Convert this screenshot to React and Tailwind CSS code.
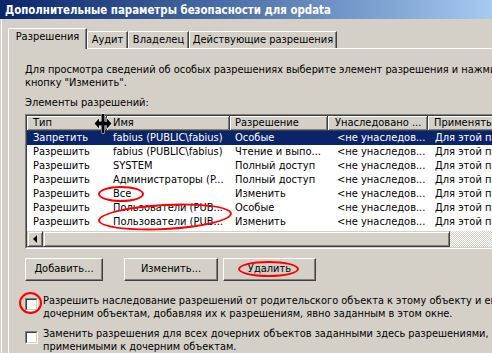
const rows = [
  ['Запретить', 'fabius (PUBLIC\\fabius)', 'Особые', '<не унаследов...', 'Для этой папки, ее подпапок и файлов'],
  ['Разрешить', 'fabius (PUBLIC\\fabius)', 'Чтение и выпо...', '<не унаследов...', 'Для этой папки, ее подпапок и файлов'],
  ['Разрешить', 'SYSTEM', 'Полный доступ', '<не унаследов...', 'Для этой папки, ее подпапок и файлов'],
  ['Разрешить', 'Администраторы (P...', 'Полный доступ', '<не унаследов...', 'Для этой папки, ее подпапок и файлов'],
  ['Разрешить', 'Все', 'Изменить', '<не унаследов...', 'Для этой папки, ее подпапок и файлов'],
  ['Разрешить', 'Пользователи (PUB...', 'Особые', '<не унаследов...', 'Для этой папки, ее подпапок и файлов'],
  ['Разрешить', 'Пользователи (PUB...', 'Изменить', '<не унаследов...', 'Для этой папки, ее подпапок и файлов'],
  ['Разрешить', 'СОЗДАТЕЛЬ-ВЛАДЕЛЕЦ', 'Полный доступ', '<не унаследов...', 'Только для подпапок и файлов'],
]

const cols = ['w-[80px]', 'w-[123px]', 'w-[98px]', 'w-[100px]', 'w-[200px]']
const headPad = ['pl-[6px]', 'pl-[6px]', 'pl-[5px]', 'pl-[7px]', 'pl-[6px]']
const rowPad = ['pl-[6px]', 'pl-[6px]', 'pl-[5px]', 'pl-[9px]', 'pl-[7px]']

const raised = 'border border-t-[#d4d0c8] border-l-[#d4d0c8] border-r-[#404040] border-b-[#404040] shadow-[inset_1px_1px_#ffffff,inset_-1px_-1px_#808080]'
const button = 'flex items-center justify-center h-[23px] border border-t-white border-l-white border-r-[#404040] border-b-[#404040] shadow-[inset_-1px_-1px_#808080]'

const Tab = ({ label, width }) => (
  <div className={`${width} h-[17px] flex justify-center pt-[1px] leading-[14px] border-l border-t border-white border-r border-r-[#404040] shadow-[inset_-1px_0_#808080] rounded-tl-[2px] whitespace-nowrap`}>
    {label}
  </div>
)

const Checkbox = () => (
  <div className="mt-[4px] w-[13px] h-[13px] shrink-0 border border-[#808080] border-r-white border-b-white">
    <div className="w-full h-full bg-white border border-[#404040] border-r-[#d4d0c8] border-b-[#d4d0c8]" />
  </div>
)

const Ellipse = ({ className }) => (
  <div className={`absolute border-2 border-[#ff0000] rounded-[50%] pointer-events-none ${className}`} />
)

const ResizeCursor = () => (
  <svg className="absolute left-[93px] top-[113px]" width="20" height="21" viewBox="0 0 20 21">
    <path
      d="M8.5 1 H11.5 V8.5 H14 V5.5 L18.5 10.5 L14 15.5 V12.5 H11.5 V20 H8.5 V12.5 H6 V15.5 L1.5 10.5 L6 5.5 V8.5 H8.5 Z"
      fill="#000"
      stroke="#fff"
      strokeWidth="1"
      paintOrder="stroke"
    />
  </svg>
)

export default function App() {
  return (
    <div className="relative w-[492px] h-[353px] overflow-hidden bg-[#d4d0c8] text-black text-[11px] font-['DejaVu_Sans_Condensed','Liberation_Sans',sans-serif]">
      <div className="h-[19px] leading-[19px] pl-[5px] pt-[1px] bg-linear-to-r from-[#0a246a] to-[#a6caf0] text-white text-[11.4px] font-bold whitespace-nowrap">
        Дополнительные параметры безопасности для opdata
      </div>

      <div className="ml-[1px] border-l border-white h-[334px] pl-[6px] pt-[9px]">
        <div className="flex items-end h-[20px]">
          <div className="relative z-10 -mb-[1px] w-[79px] h-[21px] flex justify-center pt-[1px] leading-[14px] bg-[#d4d0c8] border-l border-t border-white border-r border-r-[#404040] shadow-[inset_-1px_0_#808080] rounded-tl-[2px]">
            Разрешения
          </div>
          <Tab label="Аудит" width="w-[41px]" />
          <Tab label="Владелец" width="w-[61px]" />
          <Tab label="Действующие разрешения" width="w-[148px]" />
        </div>

        <div className="border-t border-l border-white h-[320px] pl-[16px] pt-[14px]">
          <div className="leading-[13px] whitespace-nowrap text-[10.9px]">
            <div>Для просмотра сведений об особых разрешениях выберите элемент разрешения и нажмите</div>
            <div>кнопку "Изменить".</div>
          </div>
          <div className="mt-[7px] leading-[13px]">Элементы разрешений:</div>

          <div className="mt-[5px] w-[480px] border border-[#808080] border-r-white border-b-white">
            <div className="bg-white border border-[#404040] border-r-[#d4d0c8] border-b-[#d4d0c8]">
              <div className="flex h-[15px] bg-[#d4d0c8]">
                {['Тип', 'Имя', 'Разрешение', 'Унаследовано ...', 'Применять к'].map((h, i) => (
                  <div key={h} className={`${cols[i]} ${headPad[i]} shrink-0 leading-[14px] whitespace-nowrap overflow-hidden border-r border-b border-[#404040] shadow-[inset_1px_1px_#ffffff,inset_-1px_-1px_#808080]`}>
                    {h}
                  </div>
                ))}
              </div>

              <div className="h-[100px] overflow-hidden">
                {rows.map((r, ri) => (
                  <div key={ri} className={`flex h-[14px] leading-[14px] ${ri === 0 ? 'bg-[#0a246a] text-white' : ''}`}>
                    {r.map((c, ci) => (
                      <div key={ci} className={`${cols[ci]} ${rowPad[ci]} shrink-0 whitespace-nowrap overflow-hidden`}>
                        {c}
                      </div>
                    ))}
                  </div>
                ))}
              </div>

              <div className="flex h-[16px] bg-[#d4d0c8]">
                <div className={`w-[16px] h-[16px] shrink-0 flex items-center justify-center ${raised}`}>
                  <svg width="8" height="8" viewBox="0 0 8 8">
                    <polygon points="2,4 6,0 6,8" fill="#000" />
                  </svg>
                </div>
                <div className={`w-[407px] h-[16px] shrink-0 ${raised}`} />
                <div className="flex-1 bg-[image:repeating-conic-gradient(#ffffff_0_25%,#d4d0c8_0_50%)] bg-[length:2px_2px]" />
              </div>
            </div>
          </div>

          <div className="flex mt-[9px]">
            <div className={`${button} w-[78px]`}>Добавить...</div>
            <div className={`${button} w-[94px] ml-[21px]`}>Изменить...</div>
            <div className={`${button} w-[93px] ml-[5px]`}>Удалить</div>
          </div>

          <div className="flex items-start gap-[5px] mt-[13px]">
            <Checkbox />
            <div className="leading-[13px] whitespace-nowrap text-[10.9px]">
              <div>Разрешить наследование разрешений от родительского объекта к этому объекту и его</div>
              <div>дочерним объектам, добавляя их к разрешениям, явно заданным в этом окне.</div>
            </div>
          </div>

          <div className="flex items-start gap-[5px] mt-[7px]">
            <Checkbox />
            <div className="leading-[13px] whitespace-nowrap text-[10.9px]">
              <div>Заменить разрешения для всех дочерних объектов заданными здесь разрешениями,</div>
              <div>применимыми к дочерним объектам.</div>
            </div>
          </div>
        </div>
      </div>

      <ResizeCursor />
      <Ellipse className="left-[98px] top-[186px] w-[46px] h-[16px]" />
      <Ellipse className="left-[98px] top-[204px] w-[134px] h-[26px] -rotate-3" />
      <Ellipse className="left-[238px] top-[261px] w-[61px] h-[16px]" />
      <Ellipse className="left-[19px] top-[292px] w-[23px] h-[22px]" />
    </div>
  )
}
